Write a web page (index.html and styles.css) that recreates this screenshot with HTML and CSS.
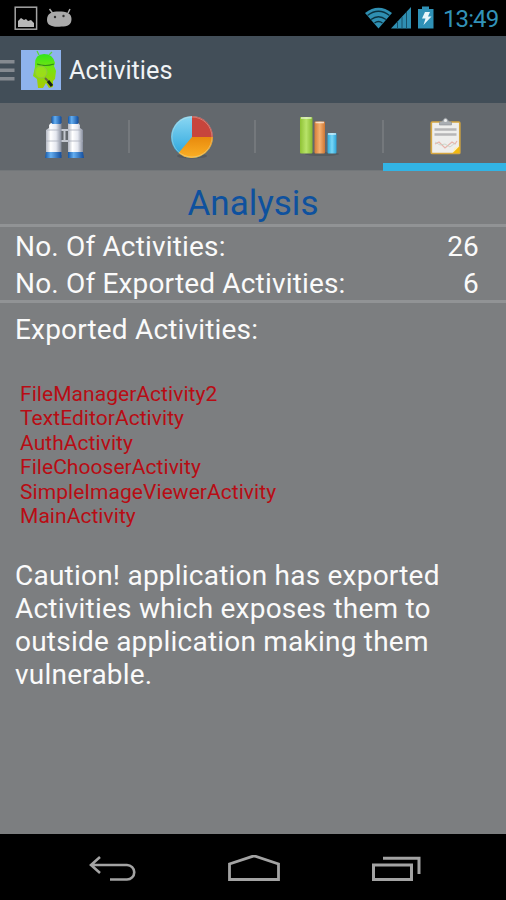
FILE: index.html
```html
<!DOCTYPE html>
<html lang="en">
<head>
<meta charset="utf-8">
<title>Activities</title>
<link rel="stylesheet" href="styles.css">
</head>
<body>
<div class="phone">
  <header class="status">
    <svg class="status-left" width="80" height="36" viewBox="0 0 80 36">
      <rect x="15.2" y="7.2" width="21.4" height="22" fill="none" stroke="#a4a4a4" stroke-width="1.5"/>
      <path d="M18 27v-6l3-3 3 2 2-1 2 2 3-1 3 3v4z" fill="#b9b9b9"/>
      <path d="M49.500 9l3 4M70 9l-2 4" stroke="#aaa" stroke-width="1.5"/>
      <path d="M47 20c0-7 5-8.500 12-8.500s12.500 1.500 12.500 7.500-4 7.500-10 7.500c-9 1-14.500-1-14.500-6.500z" fill="#aaa"/>
      <circle cx="55" cy="17" r="1.200" fill="#333"/><circle cx="63.500" cy="16" r="1.200" fill="#333"/>
    </svg>
    <svg class="status-right" width="80" height="36" viewBox="0 0 80 36">
      <path d="M1 13Q14.500 2.500 28 13L14.500 28.500z" fill="#2f8fb2"/>
      <path d="M3.500 15.500q11-8.500 22 0M7 19.500q7.500-5.500 15 0M10.500 23q4-3 8 0" fill="none" stroke="#0b3240" stroke-width="1.300"/>
      <path d="M27 28.500L47 7v21.500z" fill="#2f8fb2"/>
      <path d="M33.500 21v7.500M38 17v11.500M42.500 12v16.500" stroke="#185168" stroke-width="1"/>
      <path d="M54 9h4V6.500h7V9h4.500v19.500H54z" fill="#2f91b6"/>
      <path d="M61 12h5l-2 4.500h3.500L59.500 25l2-6.500h-3.500z" fill="#e8f6fa"/>
    </svg>
    <span class="clock">13:49</span>
  </header>

  <div class="action-bar">
    <svg class="drawer" width="15" height="24" viewBox="0 0 15 24"><path d="M0 3.800h14.500M0 12.200h14.500M0 20.700h14.500" stroke="#858a90" stroke-width="3.400"/></svg>
    <svg class="app-icon" width="40" height="40" viewBox="0 0 40 40">
      <defs><linearGradient id="robot" x2="0" y2="1"><stop offset="0" stop-color="#31e51c"/><stop offset=".4" stop-color="#75e510"/><stop offset="1" stop-color="#a9c904"/></linearGradient></defs>
      <rect width="40" height="40" fill="#8eb3ed"/>
      <path d="M14 14Q14 4 23 4t11 9l-1 3 2 5-1 8-2 2v6l-4 1-3-5-3 5h-5l-1-9-4-3 2-9z" fill="url(#robot)"/>
      <path d="M18 5l-2-4M28 5l3-3" stroke="#58dc2e" stroke-width="1.200"/>
      <path d="M16 14q8 3 17 0" fill="none" stroke="#318b19" stroke-width="1.200"/>
      <circle cx="20" cy="22" r="6" fill="#b6de29" fill-opacity=".45" stroke="#8fc447"/>
      <path d="M24 28l3 3" stroke="#656b42" stroke-width="2"/><path d="M27 31l4 5" stroke="#172018" stroke-width="3"/>
    </svg>
    <h1 class="title">Activities</h1>
  </div>

  <nav class="tabs">
    <div class="tab">
      <svg width="42" height="46" viewBox="0 0 42 46">
        <defs>
          <linearGradient id="tube"><stop offset="0" stop-color="#b5bac5"/><stop offset=".3" stop-color="#fff"/><stop offset=".65" stop-color="#e5e8f0"/><stop offset="1" stop-color="#858c9c"/></linearGradient>
          <linearGradient id="cap"><stop offset="0" stop-color="#1557a7"/><stop offset=".35" stop-color="#64aef0"/><stop offset="1" stop-color="#124c9c"/></linearGradient>
        </defs>
        <path d="M16 16h8M16 27h8M20.500 16v11" stroke="#c4c8d0" stroke-width="2"/>
        <path d="M5 11l2-2h10.500v32H2V16l3-2z" fill="url(#tube)"/><path d="M24 9h10l2 2v3l3 2v25H24z" fill="url(#tube)"/>
        <rect x="7.500" y="2" width="10" height="8" rx="1.500" fill="url(#cap)"/><rect x="24" y="2" width="10.500" height="8" rx="1.500" fill="url(#cap)"/>
        <path d="M2 38h15.500v6H1z" fill="url(#cap)"/><path d="M24 38h15l1 6H24z" fill="url(#cap)"/>
        <path d="M2 27h15M24 27h15M3 16h14M24 16h14" stroke="#a8adba" stroke-width=".8"/>
      </svg>
    </div>
    <div class="tab">
      <svg width="44" height="46" viewBox="0 0 44 46">
        <defs>
          <linearGradient id="blue" x2="0" y2="1"><stop offset="0" stop-color="#8bd7f3"/><stop offset="1" stop-color="#25a3dc"/></linearGradient>
          <linearGradient id="amber" x2="0" y2="1"><stop offset="0" stop-color="#e88a0d"/><stop offset="1" stop-color="#fbb025"/></linearGradient>
        </defs>
        <ellipse cx="22" cy="42" rx="15" ry="2.500" fill="#474c52" opacity=".5"/>
        <circle cx="22" cy="23" r="21" fill="url(#blue)"/>
        <path d="M22 23V2a21 21 0 0 1 21 21z" fill="#c7453c"/>
        <path d="M22 23h21A21 21 0 0 1 8.500 39z" fill="url(#amber)"/>
        <circle cx="22" cy="23" r="20" fill="none" stroke="#e5e5d5" stroke-opacity=".35"/>
      </svg>
    </div>
    <div class="tab tab-raised">
      <svg width="42" height="46" viewBox="0 0 42 46">
        <defs>
          <linearGradient id="g"><stop offset="0" stop-color="#8fc234"/><stop offset=".5" stop-color="#b8e36a"/><stop offset="1" stop-color="#86ba30"/></linearGradient>
          <linearGradient id="o"><stop offset="0" stop-color="#d47d38"/><stop offset=".5" stop-color="#f5b070"/><stop offset="1" stop-color="#cf7734"/></linearGradient>
          <linearGradient id="b"><stop offset="0" stop-color="#2fa8d8"/><stop offset=".5" stop-color="#78d7f7"/><stop offset="1" stop-color="#2ba4d8"/></linearGradient>
        </defs>
        <ellipse cx="24" cy="41" rx="17" ry="2" fill="#484d52" opacity=".5"/>
        <rect x="2" y="4" width="12.500" height="36.500" rx="1" fill="url(#g)"/><rect x="16.500" y="8.500" width="10.500" height="32" rx="1" fill="url(#o)"/><rect x="29.500" y="20" width="9" height="20.500" rx="1" fill="url(#b)"/>
        <path d="M3 5h10.500M17.500 9.500H26M30 21h8" stroke="#fff" stroke-opacity=".65" stroke-width="1.500"/>
      </svg>
    </div>
    <div class="tab tab-raised tab-active">
      <svg width="42" height="46" viewBox="0 0 42 46">
        <rect x="7.300" y="9" width="28.500" height="31.500" rx="1" fill="#eeeeec" stroke="#d5a640" stroke-width="1.700"/>
        <path d="M15.500 12V9l3-1q3-6 6 0l3 1v3z" fill="#aaaeb2" stroke="#898e93" stroke-width=".6"/><circle cx="21.500" cy="7.500" r="1.500" fill="#eee"/>
        <path d="M10.500 16.500h22M10.500 21.500h22" stroke="#b6b6b7" stroke-width="2.600"/>
        <path d="M11 31l4-2 6 6 7-6 3 2 2-3" fill="none" stroke="#e8b4ab" stroke-width="1.200"/><path d="M11 29l5 3 5-1 5 3 5-4" fill="none" stroke="#c3d0c2" stroke-width=".8"/>
        <path d="M28.500 40l7-7v7z" fill="#f2b90e"/><path d="M28.500 40l2-5 5-2z" fill="#fff0b4"/>
      </svg>
    </div>
  </nav>

  <main class="content">
    <h2 class="heading">Analysis</h2>
    <section class="stats">
      <div class="stat"><span>No. Of Activities:</span><span>26</span></div>
      <div class="stat"><span>No. Of Exported Activities:</span><span>6</span></div>
    </section>
    <p class="subhead">Exported Activities:</p>
    <ul class="list">
      <li>FileManagerActivity2</li>
      <li>TextEditorActivity</li>
      <li>AuthActivity</li>
      <li>FileChooserActivity</li>
      <li>SimpleImageViewerActivity</li>
      <li>MainActivity</li>
    </ul>
    <p class="caution">Caution! application has exported<br>Activities which exposes them to<br>outside application making them<br>vulnerable.</p>
  </main>

  <footer class="navbar">
    <svg width="50" height="30" viewBox="0 0 50 30"><path d="M12 2L3 10l9 8M3 10h36a7.250 7.250 0 0 1 0 14.500H22" fill="none" stroke="#a3a3a3" stroke-width="2.600"/></svg>
    <svg width="54" height="30" viewBox="0 0 54 30"><path d="M1.500 24.500V9L26 .800 50.500 9v15.500z" fill="none" stroke="#a3a3a3" stroke-width="2.800"/></svg>
    <svg width="50" height="30" viewBox="0 0 50 30"><path d="M1.500 10h38v14.500h-38zM11 3.200h36V19" fill="none" stroke="#a3a3a3" stroke-width="3"/></svg>
  </footer>
</div>
</body>
</html>
```
FILE: styles.css
```css
* { box-sizing: border-box; }
body { margin: 0; background: #000; font-family: Roboto, sans-serif; }
h1, h2, p, ul { margin: 0; padding: 0; font-weight: 400; }
svg { display: block; flex: none; }

.phone { width: 506px; height: 900px; display: flex; flex-direction: column; overflow: hidden; }

.status { height: 36px; flex: none; display: flex; background: #000; }
.status-right { margin-left: auto; margin-right: -1px; }
.clock { width: 63px; padding-top: 4px; font-size: 24px; line-height: 30px; color: #3292b8; letter-spacing: -0.9px; white-space: nowrap; }

.action-bar { height: 67px; flex: none; display: flex; align-items: center; background: #424e58; }
.app-icon { margin-left: 6px; }
.title { margin-left: 8px; padding-top: 3px; font-size: 25.300px; line-height: 30px; color: #f0f3f5; white-space: nowrap; }

.tabs { height: 68px; flex: none; display: grid; grid-template-columns: 129px 126px 128px 123px; background: #63686d; border-bottom: 1px solid #73777a; }
.tab { position: relative; display: flex; justify-content: center; padding-top: 11px; }
.tab-raised { padding-top: 10px; }
.tab + .tab::before { content: ""; position: absolute; left: -1px; top: 17px; width: 2px; height: 33px; background: #74787c; }
.tab-active { border-bottom: 8px solid #32b4e5; margin-bottom: -1px; }

.content { flex: 1; background: #7c7e80; color: #fafafa; font-size: 28px; line-height: 33px; letter-spacing: 0.170px; white-space: nowrap; }
.heading { padding-top: 12px; height: 53px; text-align: center; font-size: 35px; line-height: 41px; letter-spacing: 0; color: #0e519e; }
.stats { height: 79px; padding: 3px 27px 0 15px; border-top: 3px solid #919395; border-bottom: 3px solid #919395; }
.stat { display: flex; justify-content: space-between; height: 37px; }
.subhead { padding: 10px 15px 0; }
.list { list-style: none; padding: 35.500px 20px 0; font-size: 21px; line-height: 24.600px; letter-spacing: 0.050px; color: #b80c14; }
.caution { padding: 29.500px 15px 0; letter-spacing: 0.220px; }

.navbar { height: 66px; flex: none; display: flex; justify-content: space-between; padding: 21px 84px 0 88px; background: #000; }
```
